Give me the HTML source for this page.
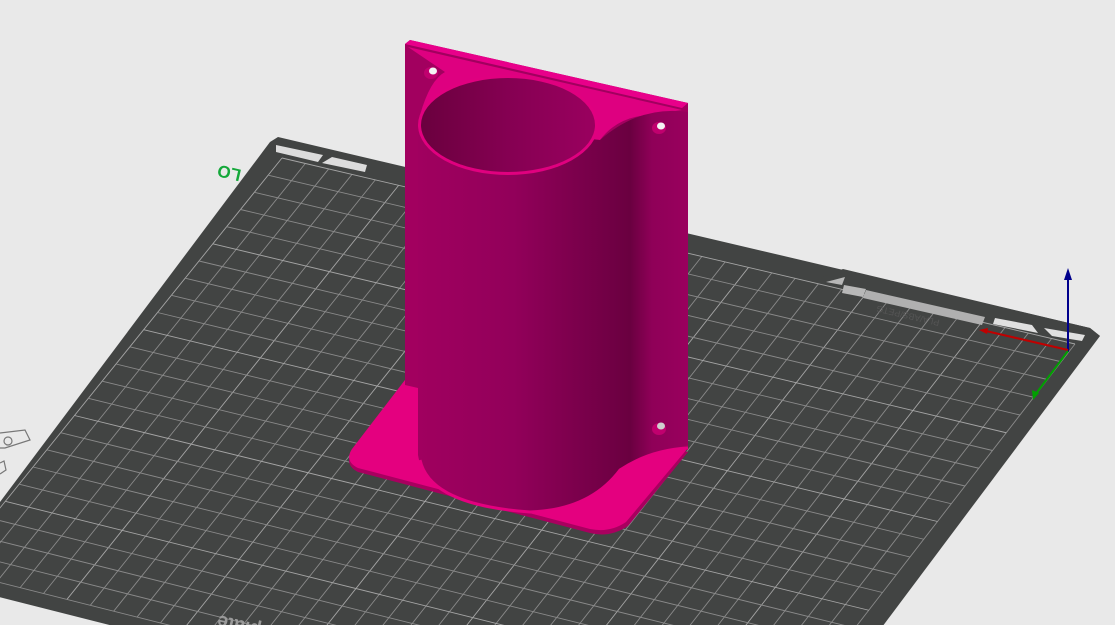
<!DOCTYPE html>
<html><head><meta charset="utf-8"><style>
html,body{margin:0;padding:0;width:1115px;height:625px;overflow:hidden;background:#e9e9e9;font-family:"Liberation Sans",sans-serif}
svg{position:absolute;left:0;top:0}
</style></head><body>
<svg id="s" width="1115" height="625" viewBox="0 0 1115 625" xmlns="http://www.w3.org/2000/svg">
<defs>
<linearGradient id="cyl" x1="418" x2="690" y1="0" y2="0" gradientUnits="userSpaceOnUse">
<stop offset="0" stop-color="#a0005f"/><stop offset="0.35" stop-color="#92005a"/><stop offset="0.6" stop-color="#7a004b"/><stop offset="0.78" stop-color="#6a0040"/><stop offset="0.86" stop-color="#8f0058"/><stop offset="1" stop-color="#9a005e"/>
</linearGradient>
<linearGradient id="inner" x1="420" x2="596" y1="0" y2="0" gradientUnits="userSpaceOnUse">
<stop offset="0" stop-color="#6a003e"/><stop offset="0.5" stop-color="#850052"/><stop offset="1" stop-color="#9a005f"/>
</linearGradient>
</defs>
<!-- plate -->
<path d="M270,142 L278,137 L1090,328 L1100,336 L760,790 L-60,582 Z" fill="#424443"/>
<path d="M820,278 L843,269 L1090,328 L1100,336 L980,330 Z" fill="#424443"/>
<g id="grid" stroke="#8a8a8a" stroke-width="0.9" fill="none"></g>
<!-- plate cutouts -->
<path d="M276,145 L323,155 L318,162 L276,152 Z" fill="#dcdcdc"/>
<path d="M332,157 L367,165 L365,172 L322,163 Z" fill="#dcdcdc"/>
<path d="M826,282 L845,277 L842,285 Z" fill="#b8b8b8"/>
<path d="M844,285 L866,289 L863,297 L842,293 Z" fill="#b8b8b8"/>
<path d="M866,290 L985,317 L982,325 L863,298 Z" fill="#b0b0b0"/>
<text x="0" y="0" font-size="9" fill="#555" transform="translate(940,320) rotate(193)">PLA/ABS/PETG</text>
<path d="M995,318 L1032,325 L1038,333 L993,324 Z" fill="#e0e0e0"/>
<path d="M1044,328 L1085,335 L1082,341 L1052,336 Z" fill="#e0e0e0"/>
<text x="0" y="0" font-size="17" font-weight="bold" fill="#14a83a" transform="translate(242,170) rotate(193)">LO</text>
<text x="0" y="0" font-size="19" font-weight="bold" fill="#9a9a9a" transform="translate(262,625) rotate(193)">plate</text>
<!-- left side icons -->
<path d="M0,433 L25,430 L30,440 L5,448 L0,448" fill="none" stroke="#777" stroke-width="1.2"/>
<circle cx="8" cy="441" r="4" fill="none" stroke="#777" stroke-width="1.2"/>
<path d="M0,463 L4,461 L6,470 L0,474" fill="none" stroke="#777" stroke-width="1.2"/>
<!-- axes -->
<line x1="1068" y1="352" x2="1068" y2="278" stroke="#00008c" stroke-width="2"/>
<path d="M1064,280 L1068,268 L1072,280 Z" fill="#00008c"/>
<line x1="1068" y1="350" x2="986" y2="331" stroke="#c00000" stroke-width="2"/>
<path d="M988,328 L979,330 L987,334 Z" fill="#c00000"/>
<line x1="1068" y1="351" x2="1035" y2="395" stroke="#00a000" stroke-width="2"/>
<path d="M1032,390 L1033,400 L1039,393 Z" fill="#00a000"/>
<!-- base plate -->
<path d="M408,378 L352,452 Q344,465 358,472 L590,533 Q610,538 628,526 L688,452 Z" fill="#a8005f"/>
<path d="M408,376 L352,449 Q344,461 358,468 L590,529 Q610,533 626,522 L688,448 Z" fill="#e4007f"/>
<!-- back plate -->
<path d="M405,44 L410,40 L688,103 L688,450 L405,385 Z" fill="#a2005f"/>
<path d="M405,44 L410,40 L688,103 L682,108 Z" fill="#e8008a"/>
<!-- top fillet face -->
<path d="M408,47 L682,110 L640,116 Q615,120 600,140 L420,115 Q430,80 445,72 Z" fill="#de0080"/>
<!-- cylinder body -->
<path d="M418,125 L418,455 Q425,505 530,512 Q590,510 620,470 Q645,455 688,445 L688,112 Q640,105 600,140 L418,125 Z" fill="url(#cyl)"/>
<path d="M420,460 Q430,505 530,512 Q590,510 620,470 Q650,450 688,448" fill="none" stroke="#e4007f" stroke-width="3"/>
<!-- top ellipse rim -->
<ellipse cx="508" cy="125" rx="90" ry="50" fill="#e0007f"/>
<ellipse cx="508" cy="125" rx="87" ry="47" fill="url(#inner)"/>
<!-- holes -->
<ellipse cx="431" cy="73" rx="7" ry="6" fill="#c0006e"/><ellipse cx="433" cy="71" rx="4" ry="3.5" fill="#f4f4f4"/>
<ellipse cx="659" cy="128" rx="7" ry="6" fill="#c0006e"/><ellipse cx="661" cy="126" rx="4" ry="3.5" fill="#f4f4f4"/>
<ellipse cx="659" cy="429" rx="7" ry="6" fill="#c0006e"/><ellipse cx="661" cy="426" rx="4" ry="3.5" fill="#cfcfcf"/>
</svg>
<script>
(function(){
var g=document.getElementById('grid');
var TL=[282,158],TR=[1075,344],BR=[745,770],BL=[-50,570];
function P(u,v){var x=(1-u)*(1-v)*TL[0]+u*(1-v)*TR[0]+u*v*BR[0]+(1-u)*v*BL[0];
var y=(1-u)*(1-v)*TL[1]+u*(1-v)*TR[1]+u*v*BR[1]+(1-u)*v*BL[1];return [x,y];}
var s='';var N=34,M=24;
for(var i=0;i<=N;i++){var u=i/N;var a=P(u,0),b=P(u,1);s+='<line x1="'+a[0]+'" y1="'+a[1]+'" x2="'+b[0]+'" y2="'+b[1]+'"'+(i%5==0?' stroke="#a5a5a5"':'')+'/>';}
for(var j=0;j<=M;j++){var v=j/M;var a=P(0,v),b=P(1,v);s+='<line x1="'+a[0]+'" y1="'+a[1]+'" x2="'+b[0]+'" y2="'+b[1]+'"'+(j%5==0?' stroke="#a5a5a5"':'')+'/>';}
g.innerHTML=s;
})();
</script>
</body></html>
